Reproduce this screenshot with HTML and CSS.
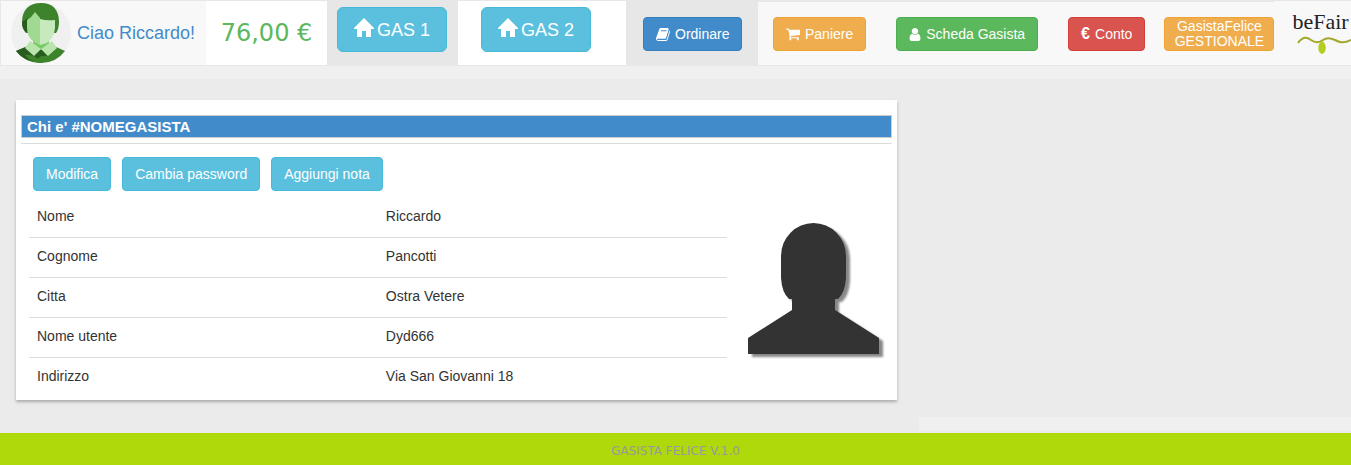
FILE: index.html
```html
<!DOCTYPE html>
<html lang="it">
<head>
<meta charset="utf-8">
<title>Gasista Felice</title>
<link rel="stylesheet" href="styles.css">
</head>
<body>
<header class="navbar">
  <div class="user">
    <svg class="avatar" viewBox="0 0 60 62" aria-hidden="true">
      <circle cx="30" cy="31" r="30" fill="#f0f0f0"/>
      <path d="M5 49 17 44H43L54 49Q45 61 30 61 14 61 5 49Z" fill="#3d832b"/>
      <path d="M5 49 17 44 30 54 23 60Q11 57 5 49Z" fill="#285c1e"/>
      <path d="M14 53Q22 51 32 61 21 62 14 53Z" fill="#3d832b"/>
      <path d="M23 54 30 47 36 54Z" fill="#285c1e"/>
      <path d="M15 31Q11 27 11 20C11 8 18 1 30 1S48 8 48 20Q48 27 45 31Z" fill="#3d832b"/>
      <path d="M11 20Q11 29 17 31V16Z" fill="#285c1e"/>
      <path d="M22 37H38V42L30 48 22 42Z" fill="#77cb66"/>
      <path d="M29 17Q36 19 44 18V26Q43 36 36 41L29 43Z" fill="#c6e9bd"/>
      <path d="M16 18Q21 15 24 10L29 16V43L23 40Q16 35 16 26Z" fill="#a0d990"/>
      <path d="M19 39 30 47 23 54 14 46Z" fill="#b9e4ad"/>
      <path d="M41 39 30 47 37 54 46 46Z" fill="#b9e4ad"/>
    </svg>
    <a class="greeting" href="#">Ciao Riccardo!</a>
  </div>
  <div class="balance">76,00 €</div>
  <div class="gas gas-active">
    <button class="btn btn-lg info" type="button"><svg class="home" viewBox="0 0 20 19" aria-hidden="true"><path d="M10 0 20 10V11H17V19H12V13H8V19H3V11H0V10Z"/></svg>GAS 1</button>
  </div>
  <div class="gas gas-other">
    <button class="btn btn-lg info" type="button"><svg class="home" viewBox="0 0 20 19" aria-hidden="true"><path d="M10 0 20 10V11H17V19H12V13H8V19H3V11H0V10Z"/></svg>GAS 2</button>
  </div>
  <div class="order">
    <button class="btn primary" type="button"><svg class="icon" viewBox="0 128 1664 1536" aria-hidden="true"><path d="M1639 478q40 57 18 129l-275 906q-19 64-76.500 107.500t-122.500 43.500h-923q-77 0-148.500-53.500t-99.500-131.500q-24-67-2-127 0-4 3-27t4-37q1-8-3-21.500t-3-19.500q2-11 8-21t16.500-23.500 16.500-23.500q23-38 45-91.500t30-91.500q3-10 .5-30t-.5-28q3-11 17-28t17-23q21-36 42-92t25-90q1-9-2.500-32t.5-28q4-13 22-30.500t22-22.500q19-26 42.500-84.500t27.500-96.500q1-8-3-25.500t-2-26.500q2-8 9-18t18-23 17-21q8-12 16.500-30.500t15-35 16-36 19.500-32 26.500-23.500 36-11.500 47.500 5.500l-1 3q38-9 51-9h761q74 0 114 56t18 130l-274 906q-36 119-71.500 153.500t-128.500 34.500h-869q-27 0-38 15-11 16-1 43 24 70 144 70h923q29 0 56-15.500t35-41.500l300-987q7-22 5-57 38 15 59 43zm-1064 2q-4 13 2 22.500t20 9.500h608q13 0 25.500-9.500t16.500-22.500l21-64q4-13-2-22.500t-20-9.500h-608q-13 0-25.500 9.500t-16.500 22.500z"/></svg>Ordinare</button>
  </div>
  <nav class="links">
    <button class="btn warning" type="button"><svg class="icon" viewBox="0 128 1664 1408" aria-hidden="true"><path d="M640 1408q0 52-38 90t-90 38-90-38-38-90 38-90 90-38 90 38 38 90zm896 0q0 52-38 90t-90 38-90-38-38-90 38-90 90-38 90 38 38 90zm128-1088v512q0 24-16.500 42.500t-40.500 21.500l-1044 122q13 60 13 70 0 16-24 64h920q26 0 45 19t19 45-19 45-45 19h-1024q-26 0-45-19t-19-45q0-11 8-31.500t16-36 21.500-40 15.500-29.500l-177-823h-204q-26 0-45-19t-19-45 19-45 45-19h256q16 0 28.500 6.500t19.500 15.500 13 24.500 8 26 5.500 29.500 4.500 26h1201q26 0 45 19t19 45z"/></svg>Paniere</button>
    <button class="btn success" type="button"><svg class="icon person" viewBox="0 0 1280 1536" aria-hidden="true"><path d="M1280 1271q0 109-62.500 187t-150.500 78h-854q-88 0-150.500-78t-62.500-187q0-85 8.500-160.500t31.500-152 58.500-131 94-89 134.500-34.500q131 128 313 128t313-128q76 0 134.500 34.500t94 89 58.500 131 31.500 152 8.500 160.500zm-256-887q0 159-112.500 271.500t-271.500 112.500-271.500-112.500-112.500-271.500 112.500-271.500 271.500-112.500 271.500 112.500 112.500 271.500z"/></svg>Scheda Gasista</button>
    <button class="btn danger" type="button"><b class="euro">€</b>Conto</button>
    <button class="btn warning manage" type="button">GasistaFelice<br>GESTIONALE</button>
  </nav>
  <a class="logo" href="#">
    <span class="logo-name">beFair</span>
    <svg class="logo-mark" viewBox="0 0 54 18" aria-hidden="true">
      <path d="M1 7C6 0 10 1 14 4S22 7 26 4 34 2 38 4 46 8 54 4" fill="none" stroke="#a3a92e" stroke-width="2"/>
      <path d="M25 5C20 7 20 17 25 18 30 17 30 7 25 5Z" fill="#b5cd1f"/>
    </svg>
  </a>
</header>
<main class="page">
  <section class="card">
    <h1 class="title">Chi e' #NOMEGASISTA</h1>
    <hr class="rule">
    <div class="actions">
      <button class="btn info" type="button">Modifica</button>
      <button class="btn info" type="button">Cambia password</button>
      <button class="btn info" type="button">Aggiungi nota</button>
    </div>
    <div class="profile">
      <table class="details">
        <tbody>
          <tr><th scope="row">Nome</th><td>Riccardo</td></tr>
          <tr><th scope="row">Cognome</th><td>Pancotti</td></tr>
          <tr><th scope="row">Citta</th><td>Ostra Vetere</td></tr>
          <tr><th scope="row">Nome utente</th><td>Dyd666</td></tr>
          <tr><th scope="row">Indirizzo</th><td>Via San Giovanni 18</td></tr>
        </tbody>
      </table>
      <svg class="photo" viewBox="0 0 131 131" role="img" aria-label="Foto">
        <path d="M33 33A32.500 33 0 0 1 98 33V55Q97 70 90 76H87V87L131 115V131H0V115L44 87V76H41Q34 70 33 55Z" fill="#333"/>
      </svg>
    </div>
  </section>
</main>
<footer class="footer">GASISTA FELICE V.1.0</footer>
</body>
</html>
```
FILE: styles.css
```css
* {
  box-sizing: border-box;
}

body {
  display: flex;
  flex-direction: column;
  min-height: 100vh;
  margin: 0;
  background: #ebebeb;
  color: #333;
  font: 14px/20px "Liberation Sans", Arial, sans-serif;
}

a {
  color: #428bca;
  text-decoration: none;
}

.navbar {
  display: flex;
  height: 66px;
  overflow: hidden;
  background: #f8f8f8;
  border: 1px solid #e7e7e7;
  border-right: 0;
}

.navbar > * {
  flex-shrink: 0;
}

.user {
  display: flex;
  align-items: center;
  gap: 6px;
  width: 205px;
  padding-left: 10px;
}

.avatar {
  width: 60px;
  height: 62px;
}

.greeting {
  font-size: 18px;
  white-space: nowrap;
}

.balance {
  display: flex;
  align-items: center;
  justify-content: center;
  width: 121px;
  background: #fff;
  color: #5cb85c;
  font: 24px/32px "DejaVu Sans", Verdana, sans-serif;
  white-space: nowrap;
}

.gas {
  padding-top: 6px;
}

.gas-active {
  width: 131px;
  padding-left: 10px;
  background: #e7e7e7;
}

.gas-other {
  width: 168px;
  padding-left: 23px;
  background: #fff;
}

.order {
  width: 132px;
  padding: 16px 0 0 17px;
  background: #e7e7e7;
}

.links {
  display: flex;
  align-items: flex-start;
  gap: 30px;
  padding: 15px 0 0 15px;
  border-top: 1px solid #e7e7e7;
}

.btn {
  display: inline-flex;
  align-items: center;
  height: 34px;
  padding: 0 12px;
  border: 1px solid;
  border-radius: 4px;
  color: #fff;
  font: inherit;
  white-space: nowrap;
}

.btn-lg {
  height: 45px;
  padding: 0 16px;
  border-radius: 6px;
  font-size: 18px;
}

.info {
  background: #5bc0de;
  border-color: #46b8da;
}

.primary {
  background: #428bca;
  border-color: #357ebd;
}

.warning {
  background: #f0ad4e;
  border-color: #eea236;
}

.success {
  background: #5cb85c;
  border-color: #4cae4c;
}

.danger {
  background: #d9534f;
  border-color: #d43f3a;
}

.home {
  width: 20px;
  height: 19px;
  margin: 0 3px 4px 0;
  fill: #fff;
}

.icon {
  width: 14px;
  height: 13px;
  margin-right: 5px;
  fill: #fff;
}

.person {
  width: 12px;
  height: 13px;
}

.euro {
  margin-right: 5px;
  font-size: 16px;
}

.manage {
  width: 110px;
  margin-left: -11px;
  justify-content: center;
  line-height: 15px;
}

.logo {
  display: flex;
  flex: 1;
  flex-direction: column;
  padding: 7px 0 0 18px;
  color: #222;
}

.logo-name {
  font: 22px/28px "Liberation Serif", "Times New Roman", serif;
}

.logo-mark {
  width: 54px;
  height: 18px;
  margin-left: 5px;
}

.page {
  flex: 1;
  padding: 34px 16px 32px;
  background:
    linear-gradient(#f0f0f0, #f0f0f0) top / 100% 13px no-repeat,
    linear-gradient(#f0f0f0, #f0f0f0) right bottom 3px / 32% 13px no-repeat,
    #ebebeb;
}

.card {
  width: calc(67% - 3px);
  padding: 15px 5px 3px;
  background: #fff;
  box-shadow: 0 2px 3px #aaa;
}

.title {
  margin: 0;
  padding: 0 5px;
  background: #428bca;
  border: 1px solid #ccc;
  color: #fff;
  font-size: 15px;
  line-height: 21px;
}

.rule {
  height: 1px;
  margin: 5px 0 13px;
  border: 0;
  background: #ddd;
}

.actions {
  display: flex;
  gap: 11px;
  padding-left: 12px;
}

.profile {
  display: flex;
  align-items: center;
  gap: 21px;
  margin-top: 6px;
  padding: 0 13px 0 8px;
}

.details {
  flex: 1;
  border-collapse: collapse;
}

.details th,
.details td {
  width: 50%;
  height: 40px;
  padding: 8px 8px 10px;
  border-bottom: 1px solid #ddd;
  font-weight: normal;
  text-align: left;
}

.details tr:last-child > * {
  border-bottom: 0;
}

.photo {
  width: 131px;
  height: 131px;
  margin-top: -18px;
  filter: drop-shadow(4px 3px 1px #888);
}

.footer {
  padding: 8px 0 4px;
  background: #aed90b;
  color: #999;
  font: 12px/20px "DejaVu Sans", Verdana, sans-serif;
  text-align: center;
}
```
